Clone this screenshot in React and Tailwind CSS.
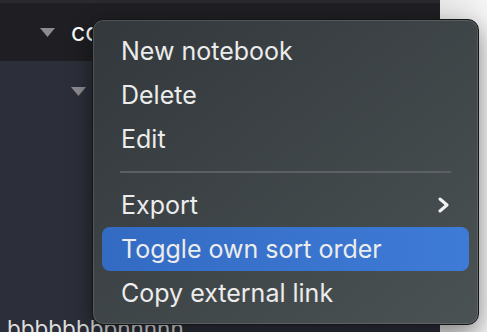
import React from 'react';

const items = [
    { label: 'New notebook' },
    { label: 'Delete' },
    { label: 'Edit' },
    { sep: true },
    { label: 'Export', sub: true },
    { label: 'Toggle own sort order', active: true },
    { label: 'Copy external link' },
];

const Caret = () => (
    <svg width="15" height="9" viewBox="0 0 15 9" className="shrink-0">
        <path d="M0 0 H15 L7.5 9 Z" fill="#8b8b90" />
    </svg>
);

const Chevron = () => (
    <svg width="14" height="16" viewBox="0 0 14 16" className="shrink-0">
        <polyline points="3,2 10,8 3,14" fill="none" stroke="#f2f2f2" strokeWidth="3" strokeLinecap="round" strokeLinejoin="round" />
    </svg>
);

export default function App() {
    return (
        <div className="relative h-[332px] w-[487px] overflow-hidden flex" style={{ fontFamily: 'Inter, "Noto Sans", sans-serif' }}>
            {/* Sidebar */}
            <div className="w-[440px] h-full flex flex-col bg-[#2c2e39]">
                <div className="h-[3px] shrink-0 bg-[#2a2a2e]" />
                <div className="h-[58px] shrink-0 bg-[#1f1f23] flex items-center pl-[40px] gap-[16px]">
                    <Caret />
                    <span className="text-[25px] text-white leading-none">collection</span>
                </div>
                <div className="h-[60px] shrink-0 flex items-center pl-[71px]">
                    <Caret />
                </div>
                <div className="h-[193px] shrink-0" />
                <div className="shrink-0 pl-[7px] text-[22.5px] leading-[30px] text-[#dedede] whitespace-nowrap">bbbbbbbbnnnnn</div>
            </div>
            {/* Right panel */}
            <div className="flex-1 bg-gradient-to-r from-[#e6e6e6] to-[#f4f4f4]" />

            {/* Context menu */}
            <div className="absolute left-[92px] top-[19px] w-[387px] h-[306px] rounded-[11px] border border-[#151515] bg-gradient-to-br from-[#32383b] to-[#4b5254] shadow-[inset_0_0_0_1px_rgba(255,255,255,0.13),0_8px_24px_rgba(0,0,0,0.45)] p-[9px] flex flex-col">
                {items.map((it, i) =>
                    it.sep ? (
                        <div key={i} className="h-[22px] shrink-0 flex items-center px-[18px]">
                            <div className="h-[2px] w-full bg-[#5a6063]" />
                        </div>
                    ) : (
                        <div
                            key={i}
                            className={`h-[44px] shrink-0 flex items-center justify-between pl-[19px] pr-[18px] rounded-[8px] ${it.active ? 'bg-gradient-to-r from-[#336bc3] to-[#3e7bd7]' : ''}`}
                        >
                            <span className="text-[25px] leading-none text-[#ececec] whitespace-nowrap">{it.label}</span>
                            {it.sub && <Chevron />}
                        </div>
                    )
                )}
            </div>
        </div>
    );
}
